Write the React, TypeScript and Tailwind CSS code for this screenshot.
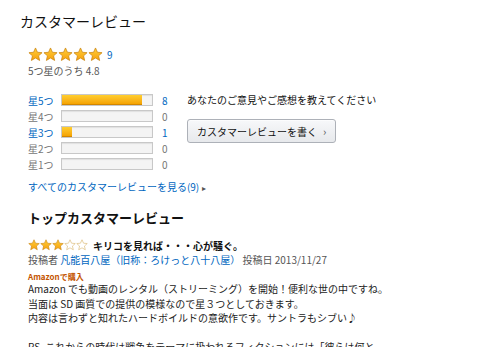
import React from "react";

const rows = [
  { label: "星5つ", count: 8, pct: 89, link: true },
  { label: "星4つ", count: 0, pct: 0, link: false },
  { label: "星3つ", count: 1, pct: 11, link: true },
  { label: "星2つ", count: 0, pct: 0, link: false },
  { label: "星1つ", count: 0, pct: 0, link: false },
];

function Star({ size, filled }: { size: number; filled: boolean }) {
  return (
    <svg width={size} height={size} viewBox="0 0 24 24">
      <defs>
        <linearGradient id="starFill" x1="0" y1="0" x2="0" y2="1">
          <stop offset="0" stopColor="#ffce3a" />
          <stop offset="1" stopColor="#f7a10c" />
        </linearGradient>
      </defs>
      <path
        d="M12 1.5l3.1 6.9 7.4.7-5.6 5 1.7 7.4L12 17.6l-6.6 3.9 1.7-7.4-5.6-5 7.4-.7z"
        fill={filled ? "url(#starFill)" : "#fff"}
        stroke={filled ? "#c98411" : "#d7b36a"}
        strokeWidth="1.2"
        strokeLinejoin="round"
      />
    </svg>
  );
}

export default function App() {
  return (
    <div className="w-[490px] h-[347px] overflow-hidden bg-white text-[#111] font-['Noto_Sans_CJK_JP',sans-serif]">
      <h2 className="pl-5 pt-[10px] text-[14px] leading-[22px] font-normal">カスタマーレビュー</h2>

      <div className="pl-7 pt-[14px]">
        {/* overall rating */}
        <div className="flex items-center gap-[4px] h-[16px]">
          <div className="flex">
            {[0, 1, 2, 3, 4].map((i) => (
              <Star key={i} size={15} filled />
            ))}
          </div>
          <span className="text-[10px] text-[#0066c0]">9</span>
        </div>
        <div className="text-[10px] leading-[14px] text-[#555] mt-[2px]">5つ星のうち 4.8</div>

        <div className="flex mt-[14px]">
          {/* histogram */}
          <div className="flex flex-col w-[159px]">
            {rows.map((r) => (
              <div key={r.label} className="flex items-center h-[16px] text-[10px]">
                <span className={`w-[33px] ${r.link ? "text-[#0066c0]" : "text-[#767676]"}`}>{r.label}</span>
                <div className="w-[92px] h-[12px] border border-[#c8c8c8] bg-[#f4f4f4] shadow-[inset_0_1px_1px_rgba(0,0,0,0.08)]">
                  {r.pct > 0 && (
                    <div
                      className="h-full bg-gradient-to-b from-[#ffce2e] to-[#f5a300] border-b border-[#d28600]"
                      style={{ width: `${r.pct}%` }}
                    />
                  )}
                </div>
                <span className={`ml-[9px] ${r.link ? "text-[#0066c0]" : "text-[#767676]"}`}>{r.count}</span>
              </div>
            ))}
          </div>

          {/* write review */}
          <div className="flex flex-col items-start">
            <div className="text-[10px] leading-[16px] text-[#111]">あなたのご意見やご感想を教えてください</div>
            <button className="mt-[11px] h-[24px] px-[9px] flex items-center rounded-[3px] border border-[#adb1b8] bg-gradient-to-b from-[#f7f8fa] to-[#e7e9ec] text-[10px] text-[#111] shadow-[0_1px_0_rgba(255,255,255,0.6)_inset]">
              カスタマーレビューを書く
              <span className="ml-[6px] text-[11px] text-[#555]">›</span>
            </button>
          </div>
        </div>

        <div className="mt-[7px] text-[10px] leading-[16px] text-[#0066c0]">
          すべてのカスタマーレビューを見る(9)
          <span className="ml-[3px] text-[8px] text-[#555]">▸</span>
        </div>

        {/* top review */}
        <h3 className="mt-[13px] text-[13px] leading-[18px] font-bold">トップカスタマーレビュー</h3>
        <div className="mt-[11px] flex items-center gap-[5px] h-[14px]">
          <div className="flex">
            {[0, 1, 2, 3, 4].map((i) => (
              <Star key={i} size={12} filled={i < 3} />
            ))}
          </div>
          <span className="text-[10px] font-bold">キリコを見れば・・・心が騒ぐ。</span>
        </div>
        <div className="text-[10px] leading-[15px] text-[#555]">
          投稿者 <span className="text-[#0066c0]">凡能百八屋（旧称：ろけっと八十八屋）</span> 投稿日 2013/11/27
        </div>
        <div className="mt-[4px] text-[8px] leading-[11px] font-bold text-[#c45500]">Amazonで購入</div>
        <p className="text-[10px] leading-[14.5px] text-[#222]">
          Amazon でも動画のレンタル（ストリーミング）を開始！便利な世の中ですね。
          <br />
          当面は SD 画質での提供の模様なので星３つとしておきます。
          <br />
          内容は言わずと知れたハードボイルドの意欲作です。サントラもシブい♪
          <br />
          <br />
          PS. これからの時代は戦争をテーマに扱われるフィクションには「彼らは何と
        </p>
      </div>
    </div>
  );
}
